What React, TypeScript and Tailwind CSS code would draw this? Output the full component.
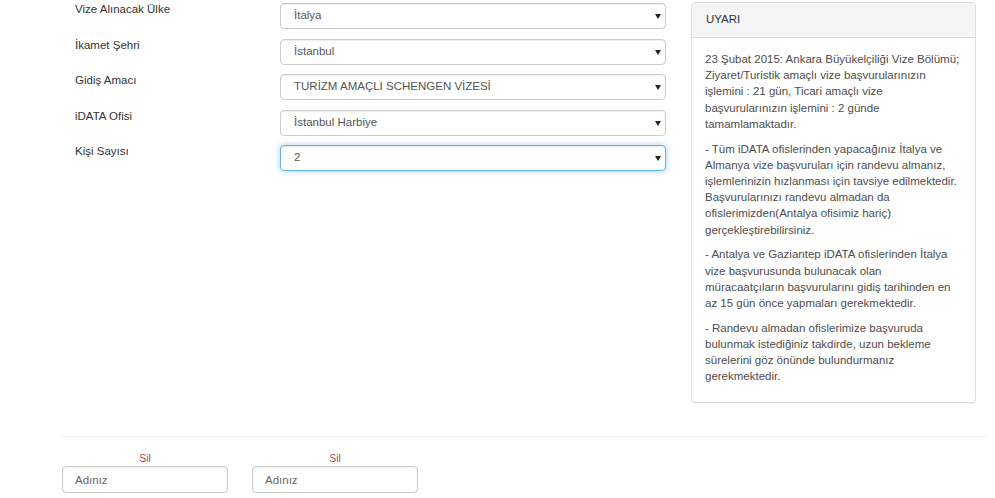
import React from 'react';

const fields = [
  { label: 'Vize Alınacak Ülke', value: 'İtalya' },
  { label: 'İkamet Şehri', value: 'İstanbul' },
  { label: 'Gidiş Amacı', value: 'TURİZM AMAÇLI SCHENGEN VİZESİ' },
  { label: 'iDATA Ofisi', value: 'İstanbul Harbiye' },
  { label: 'Kişi Sayısı', value: '2', focus: true },
];

// satırlar referanstaki kırılımlarla aynı tutuldu
const notes = [
  [
    '23 Şubat 2015: Ankara Büyükelçiliği Vize Bölümü;',
    'Ziyaret/Turistik amaçlı vize başvurularınızın',
    'işlemini : 21 gün, Ticari amaçlı vize',
    'başvurularınızın işlemini : 2 günde',
    'tamamlamaktadır.',
  ],
  [
    '- Tüm iDATA ofislerinden yapacağınız İtalya ve',
    'Almanya vize başvuruları için randevu almanız,',
    'işlemlerinizin hızlanması için tavsiye edilmektedir.',
    'Başvurularınızı randevu almadan da',
    'ofislerimizden(Antalya ofisimiz hariç)',
    'gerçekleştirebilirsiniz.',
  ],
  [
    '- Antalya ve Gaziantep iDATA ofislerinden İtalya',
    'vize başvurusunda bulunacak olan',
    'müracaatçıların başvurularını gidiş tarihinden en',
    'az 15 gün önce yapmaları gerekmektedir.',
  ],
  [
    '- Randevu almadan ofislerimize başvuruda',
    'bulunmak istediğiniz takdirde, uzun bekleme',
    'sürelerini göz önünde bulundurmanız',
    'gerekmektedir.',
  ],
];

const Select: React.FC<{ value: string; focus?: boolean }> = ({ value, focus }) => (
  <div
    className={
      'relative w-[386px] h-[26px] rounded-[4px] border bg-white flex items-center pl-[13px] text-[11.5px] text-[#555] ' +
      (focus
        ? 'border-[#66afe9] shadow-[inset_0_1px_1px_rgba(0,0,0,0.075),0_0_6px_rgba(102,175,233,0.6)]'
        : 'border-[#ccc] shadow-[inset_0_1px_1px_rgba(0,0,0,0.075)]')
    }
  >
    <span>{value}</span>
    <svg className="absolute right-[4px] top-[10px]" width="6" height="5" viewBox="0 0 6 5">
      <path d="M0 0 L6 0 L3 5 Z" fill="#222" />
    </svg>
  </div>
);

export default function App() {
  return (
    <div className="w-[995px] h-[498px] bg-white overflow-hidden font-['Liberation_Sans',Arial,sans-serif] text-[#333]">
      <div className="flex pt-[3px]">
        <div className="w-[691px] flex flex-col gap-[9.5px]">
          {fields.map((f) => (
            <div key={f.label} className="flex items-start">
              <label className="pl-[75px] w-[280px] text-[11.5px] leading-[14px] text-[#333] -mt-[1px]">{f.label}</label>
              <Select value={f.value} focus={f.focus} />
            </div>
          ))}
        </div>
        <div className="w-[285px] h-[401px] -mt-[1px] border border-[#ddd] rounded-[4px] shadow-[0_1px_1px_rgba(0,0,0,0.05)] overflow-hidden">
          <div className="h-[35px] bg-[#f5f5f5] border-b border-[#ddd] px-[14px] flex items-center text-[11.5px] text-[#333]">
            UYARI
          </div>
          <div className="px-[13px] pt-[13px] text-[11.5px] leading-[16.2px] text-[#4d4d4d]">
            {notes.map((lines, i) => (
              <p key={i} className="mb-[8.6px] whitespace-nowrap">
                {lines.map((l, j) => (
                  <React.Fragment key={j}>
                    {l}
                    {j < lines.length - 1 && <br />}
                  </React.Fragment>
                ))}
              </p>
            ))}
          </div>
        </div>
      </div>
      <div className="ml-[62px] mr-[8px] mt-[33px] border-t border-[#eee]" />
      <div className="flex gap-[24px] pl-[62px] mt-[15px]">
        {[0, 1].map((i) => (
          <div key={i} className="flex flex-col items-center w-[166px]">
            <span className="text-[10.5px] leading-[12px] text-[#b0474f]">Sil</span>
            <input
              placeholder="Adınız"
              className="mt-[2px] w-[166px] h-[27px] rounded-[4px] border border-[#ccc] px-[12px] text-[11.5px] text-[#555] placeholder:text-[#666] shadow-[inset_0_1px_1px_rgba(0,0,0,0.075)] outline-none"
            />
          </div>
        ))}
      </div>
    </div>
  );
}
